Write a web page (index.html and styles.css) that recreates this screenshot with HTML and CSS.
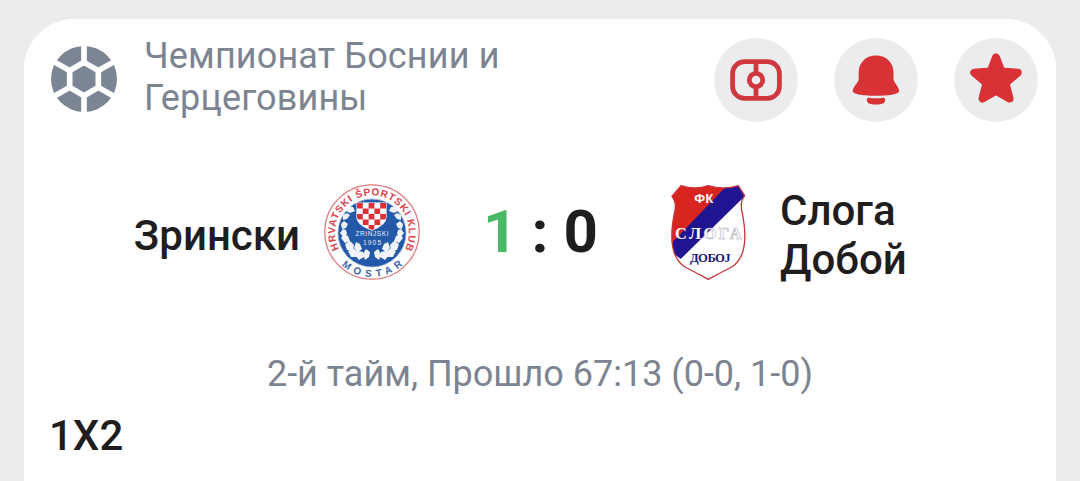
FILE: index.html
```html
<!DOCTYPE html>
<html lang="ru">
<head>
  <meta charset="UTF-8">
  <meta name="viewport" content="width=device-width, initial-scale=1.0">
  <title>Зрински - Слога Добой</title>
  <link rel="stylesheet" href="styles.css">
</head>
<body>
  <div class="card">
    <div class="header">
      <svg class="sport-icon" viewBox="33 33 198 198">
        <circle cx="132" cy="132" r="99" fill="#7c8594"/>
        <g fill="none" stroke="#fff" stroke-width="17">
          <path d="M132 82L175 107V157L132 182L89 157V107Z"/>
          <path d="M132 82V25M132 182V240M89 107L35 76M175 107L229 76M89 157L35 188M175 157L229 188"/>
        </g>
      </svg>
      <h1 class="league">Чемпионат Боснии и Герцеговины</h1>
      <div class="actions">
        <button class="action-btn">
          <svg viewBox="0 0 84 84" fill="none" stroke="#d0383f" stroke-width="4.8">
            <rect x="18.600" y="23.600" width="46.800" height="36.800" rx="12"/>
            <circle cx="42" cy="42" r="6.700"/>
            <path d="M42 23.600V35M42 49V60"/>
          </svg>
        </button>
        <button class="action-btn">
          <svg viewBox="0 0 84 84" fill="#d83136">
            <path d="M42 17.500C31.500 17.500 24.700 25 24.700 34.500V41C24.700 44.500 18.700 49 18.700 53C18.700 56.500 31 57.800 42 57.800C53 57.800 65.200 56.500 65.200 53C65.200 49 59.500 44.500 59.500 41V34.500C59.500 25 52.500 17.500 42 17.500Z"/>
            <path d="M34.500 59.700Q42 61 49.500 59.700Q51.300 59.700 51.200 62C51 65 49 66.500 42 66.500C35 66.500 33 65 32.800 62Q32.800 59.700 34.500 59.700Z"/>
          </svg>
        </button>
        <button class="action-btn">
          <svg viewBox="0 0 84 84" fill="#d83136" stroke="#d83136" stroke-width="8" stroke-linejoin="round">
            <path d="M42 19.500L47.300 33.500L63.700 34.700L51.500 45L55.500 60.500L42 52.700L28.500 60.500L32.500 45L20.300 34.700L36.700 33.500Z"/>
          </svg>
        </button>
      </div>
    </div>

    <div class="match">
      <div class="team team-home">Зрински</div>
      <svg class="crest crest-home" viewBox="-48 -48 96 96">
        <defs>
          <path id="arcTop" d="M-33 17A37 37 0 1 1 33 17"/>
          <path id="arcBottom" d="M-31 32.600A45 45 0 0 0 31 32.600"/>
          <clipPath id="shieldClip"><path d="M-15 -29H14V-15Q14 -8 0 -2Q-15 -8 -15 -15Z"/></clipPath>
          <pattern id="checks" x="-15" y="-29" width="11.600" height="11" patternUnits="userSpaceOnUse">
            <rect width="11.600" height="11" fill="#fff"/>
            <rect width="5.800" height="5.500" fill="#dd3038"/>
            <rect x="5.800" y="5.500" width="5.800" height="5.500" fill="#dd3038"/>
          </pattern>
        </defs>
        <circle r="47.200" fill="#fff" stroke="#df777c" stroke-width="1.300"/>
        <circle cy="1" r="33.800" fill="#2459aa"/>
        <circle cy="1" r="34" fill="none" stroke="#7899ca" stroke-width="0.700"/>
        <!-- wreath -->
        <g id="branch" fill="#f1f5fb">
          <path d="M-19 -25l-5 0-2 4 4 2 5-2zM-25 -19l-4 2 0 5 4-1 3-4zM-28 -11l-3 3 1 5 4-1 2-4zM-29 -3l-3 4 3 4 4-3-1-4zM-24 4l-4-2-3 4 4 5 5-2zM-27 12l2 6 6 0 1-5-4-4zM-19 16l-5 3 3 6 5 0 2-5zM-16 10l-2 6 4 4 4-3-2-5zM-13 19l-4 4 4 5 5-3-1-5zM-6 17l-3 5 2 6 4-3 1-5z"/>
        </g>
        <use href="#branch" transform="scale(-1 1)"/>
        <path d="M-15.600 -29.500H14.600V-15Q14.600 -7 0 -1.200Q-15.600 -7 -15.600 -15Z" fill="#fff"/>
        <rect x="-15" y="-29" width="29" height="27" fill="url(#checks)" clip-path="url(#shieldClip)"/>
        <text class="crest-word" x="0" y="4.200" textLength="33">ZRINJSKI</text>
        <text class="crest-word" x="0" y="12.700" textLength="18">1905</text>
        <text class="ring-text ring-red"><textPath href="#arcTop" startOffset="0" textLength="151" lengthAdjust="spacing">HRVATSKI ŠPORTSKI KLUB</textPath></text>
        <text class="ring-text ring-blue"><textPath href="#arcBottom" startOffset="1" textLength="67">MOSTAR</textPath></text>
      </svg>
      <div class="score"><span class="score-lead">1</span><span class="score-colon">:</span><span>0</span></div>
      <svg class="crest crest-away" viewBox="27 24 234 294">
        <defs>
          <clipPath id="awayClip"><path id="awayShape" d="M63 32Q105 46 145 32Q190 46 235 32L254 62Q238 82 247 115C260 180 262 246 215 276Q180 294 145 313Q110 294 75 276C28 246 30 180 43 115Q52 85 36 64Z"/></clipPath>
        </defs>
        <g clip-path="url(#awayClip)">
          <rect x="27" y="24" width="234" height="294" fill="#fff"/>
          <path d="M20 20H225L20 232Z" fill="#d9251f"/>
          <path d="M212 20H270V48L62 252L20 220Z" fill="#201590"/>
        </g>
        <use href="#awayShape" fill="none" stroke="#c9343c" stroke-width="4"/>
        <text class="away-fk" x="131" y="83" textLength="57">ФК</text>
        <text class="away-name" x="45" y="192" textLength="200"><tspan fill="#fff">СЛ</tspan><tspan fill="#fff" stroke="#b9b9c5" stroke-width="2">ОГА</tspan></text>
        <text class="away-city" x="151" y="261" textLength="122">ДОБОЈ</text>
      </svg>
      <div class="team team-away">Слога Добой</div>
    </div>

    <div class="status">2-й тайм, Прошло 67:13 (0-0, 1-0)</div>
    <h2 class="market">1X2</h2>
  </div>
</body>
</html>
```
FILE: styles.css
```css
* {
  margin: 0;
  padding: 0;
  box-sizing: border-box;
}

body {
  height: 481px;
  padding: 19px 24px 0;
  overflow: hidden;
  background-color: #ebecee;
  font-family: Roboto, sans-serif;
  color: #1f1d1e;
}

.card {
  height: 462px;
  background-color: #fff;
  border-radius: 50px 50px 0 0;
}

.header {
  display: flex;
  align-items: flex-start;
  height: 125px;
  padding: 15px 18px 0 27px;
}

.sport-icon {
  width: 66px;
  height: 66px;
  margin-top: 12px;
}

.league {
  width: 400px;
  margin: 1px 0 0 27px;
  font-size: 36px;
  font-weight: 400;
  line-height: 42px;
  letter-spacing: 0.15px;
  color: #7c8491;
}

.actions {
  display: flex;
  gap: 36px;
  margin: 4px 0 0 auto;
}

.action-btn {
  width: 84px;
  height: 84px;
  border: none;
  border-radius: 50%;
  background-color: #ebecee;
  cursor: pointer;
}

.action-btn svg {
  display: block;
  width: 84px;
  height: 84px;
}

.match {
  display: flex;
  align-items: center;
  height: 176px;
}

.team {
  font-size: 42px;
  font-weight: 500;
  line-height: 49px;
}

.team-home {
  width: 276px;
  padding-top: 7px;
  text-align: right;
}

.team-away {
  width: 180px;
  margin-left: 33px;
  padding-top: 6px;
}

.crest {
  flex: none;
}

.crest-home {
  width: 96px;
  height: 96px;
  margin-left: 24px;
}

.crest-away {
  width: 78px;
  height: 98px;
}

.score {
  display: flex;
  justify-content: center;
  width: 249px;
  padding-right: 8px;
  font-size: 60px;
  font-weight: 700;
  line-height: 70px;
}

.score-lead {
  color: #4ab866;
}

.score-colon {
  margin: 0 15px 0 14px;
}

.status {
  margin-top: 33px;
  font-size: 36px;
  line-height: 42px;
  text-align: center;
  color: #7c8491;
}

.market {
  margin: 17px 0 0 25px;
  font-size: 42px;
  font-weight: 500;
  line-height: 48px;
}

.crest-word {
  font: 6.5px "Liberation Sans", sans-serif;
  fill: #e7eefa;
  text-anchor: middle;
}

.ring-text {
  font: 700 10px "Liberation Sans", sans-serif;
}

.ring-red {
  fill: #d9434b;
}

.ring-blue {
  fill: #3e67ad;
}

.away-fk {
  font: 700 38px "Liberation Sans", sans-serif;
  fill: #fff;
  text-anchor: middle;
}

.away-name {
  font: 700 49px "Liberation Serif", serif;
}

.away-city {
  font: 700 38px "Liberation Serif", serif;
  fill: #1d1a70;
  text-anchor: middle;
}
```
